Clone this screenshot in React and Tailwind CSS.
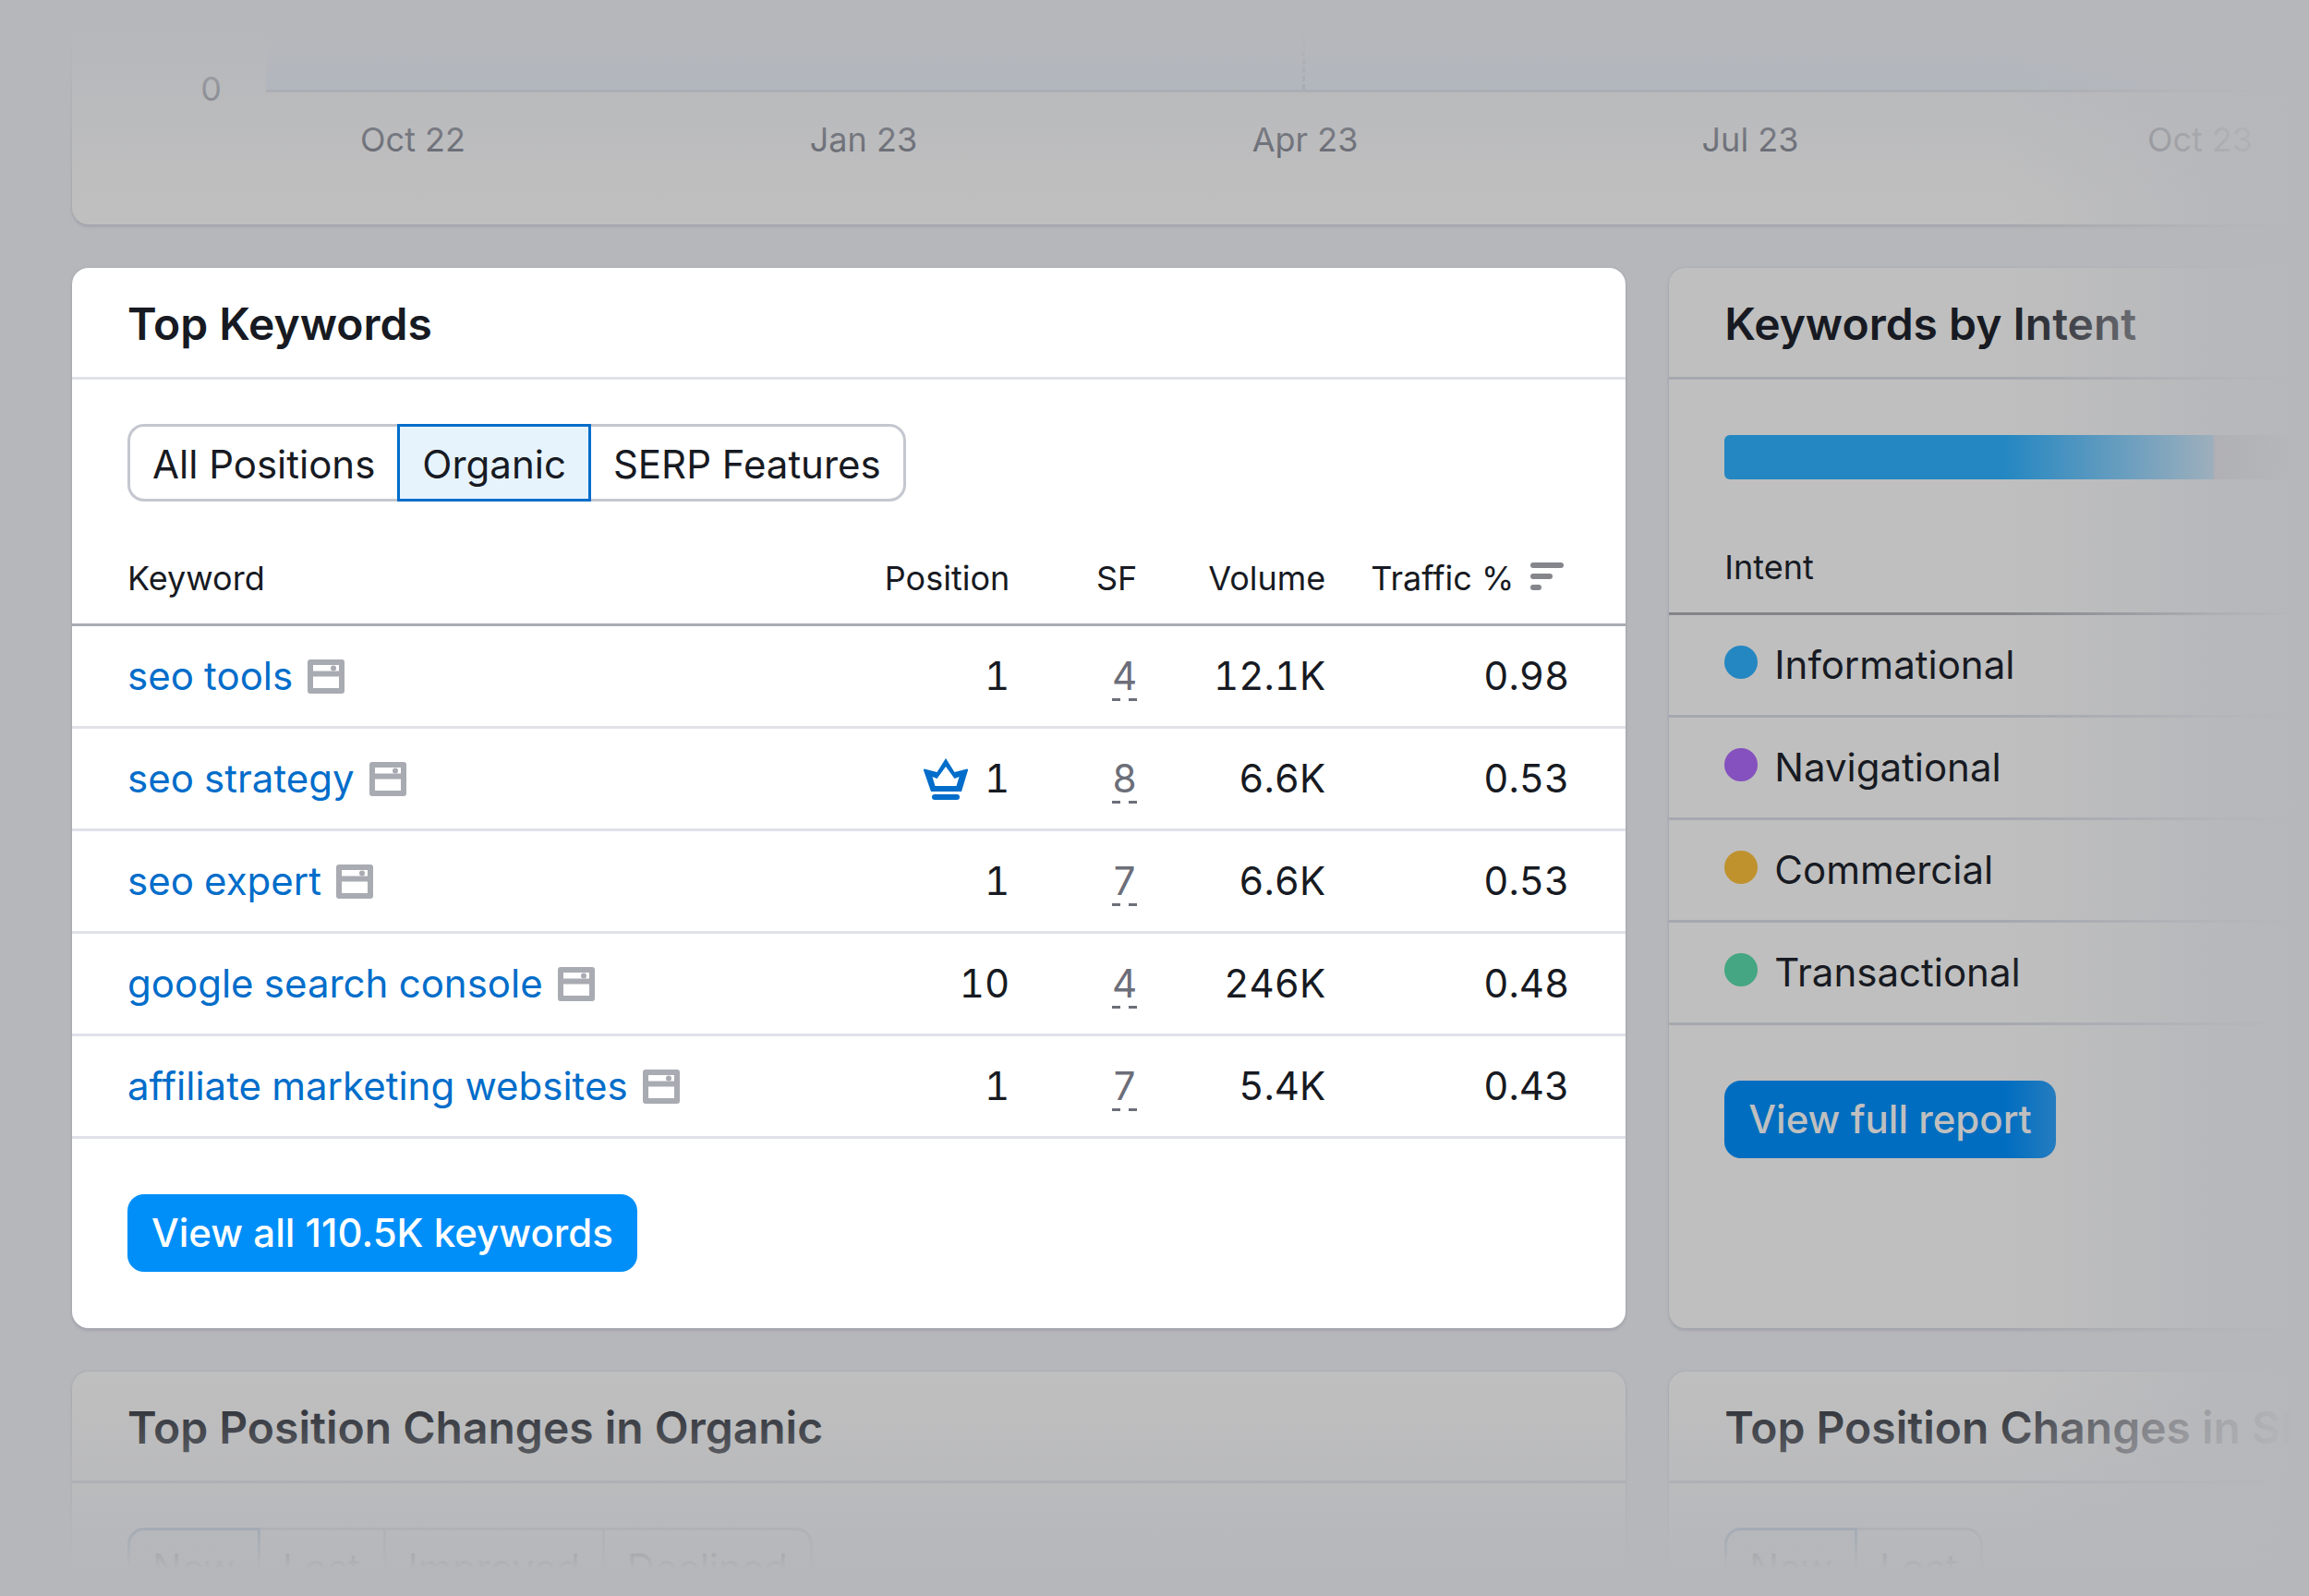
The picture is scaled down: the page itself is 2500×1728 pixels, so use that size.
const rows = [
  { keyword: 'seo tools', position: '1', sf: '4', volume: '12.1K', traffic: '0.98' },
  { keyword: 'seo strategy', position: '1', crown: true, sf: '8', volume: '6.6K', traffic: '0.53' },
  { keyword: 'seo expert', position: '1', sf: '7', volume: '6.6K', traffic: '0.53' },
  { keyword: 'google search console', position: '10', sf: '4', volume: '246K', traffic: '0.48' },
  { keyword: 'affiliate marketing websites', position: '1', sf: '7', volume: '5.4K', traffic: '0.43' },
];

const intents = [
  { name: 'Informational', dot: 'bg-[#2487c2]' },
  { name: 'Navigational', dot: 'bg-[#8451be]' },
  { name: 'Commercial', dot: 'bg-[#bf922e]' },
  { name: 'Transactional', dot: 'bg-[#44a682]' },
];

const months = ['Oct 22', 'Jan 23', 'Apr 23', 'Jul 23', 'Oct 23'];

const dimCard = 'bg-[#bfbfbf] shadow-[0_0_3px_#a0a3ab,0_3px_3px_#a4a7ad]';

function SerpIcon() {
  return (
    <svg className="mt-0.5 h-[37px] w-10 shrink-0" viewBox="0 0 40 37" fill="none" aria-hidden="true">
      <rect x="3" y="3" width="34" height="31" stroke="#a9abb2" strokeWidth="6" strokeLinejoin="round" />
      <path d="M3 15.5h34" stroke="#a9abb2" strokeWidth="6" />
      <circle cx="28" cy="9.5" r="3" fill="#a9abb2" />
    </svg>
  );
}

function CrownIcon() {
  return (
    <svg className="mt-0.5 h-[45px] w-12 shrink-0" viewBox="0 0 48 45" fill="#006dca" aria-hidden="true">
      <path
        fillRule="evenodd"
        d="M24 0 L33.5 15 L47 11.5 Q48.3 11.5 48 13 L41 36 H8 L0 13 Q-.3 11.5 1 11.5 L14.5 15 Z M24 9 L14.5 22 L9.5 20 L12.5 30 H35.5 L38.5 20 L33.5 22 Z"
      />
      <rect x="9" y="39" width="30" height="6" rx="3" />
    </svg>
  );
}

function SortIcon() {
  return (
    <svg className="mb-1 h-[30px] w-9 shrink-0" viewBox="0 0 36 30" fill="#85868c" aria-hidden="true">
      <rect width="36" height="6" rx="3" />
      <rect y="12" width="24" height="6" rx="3" />
      <rect y="24" width="12" height="6" rx="3" />
    </svg>
  );
}

function CardTitle({ children, className }) {
  return (
    <h2 className={'flex h-[121px] items-center overflow-hidden border-b-3 pt-1 pl-[60px] text-5xl leading-[60px] font-[630] whitespace-nowrap ' + className}>
      {children}
    </h2>
  );
}

function DimTabs({ items, label }) {
  return (
    <div role="group" aria-label={label} className="mx-[60px] mt-12 flex h-21">
      {items.map((item, i) => (
        <button
          key={item}
          type="button"
          aria-pressed={i === 0}
          className={
            i === 0
              ? 'rounded-l-[18px] border-3 border-[#5f7d98] bg-[#b2b8bd] px-6 pt-1'
              : 'border-y-3 border-r-3 border-[#9a9da8] px-6 pt-1 last:rounded-r-[18px]'
          }
        >
          {item}
        </button>
      ))}
    </div>
  );
}

export default function App() {
  return (
    <div className="relative h-screen overflow-hidden bg-[#b6b7bb] font-[Inter,sans-serif] text-[42px] leading-[60px] text-[#171a22] [font-optical-sizing:none]">
      <main className="grid grid-cols-[minmax(0,17fr)_minmax(0,7fr)] gap-x-[47px] gap-y-[47px] pl-[78px]">
        <section aria-label="Traffic trend" className={'col-span-2 h-[243px] rounded-bl-[18px] ' + dimCard}>
          <div className="flex h-[100px]">
            <span className="w-[210px] pt-[66px] pr-[48px] text-right text-4xl leading-[60px] text-[#4c4f5a]">0</span>
            <div className="flex-1 border-b-3 border-[#9a9da8] bg-[#a9b7c3]">
              <div className="ml-[1122px] h-full w-0 border-l-3 border-dashed border-[#8f939e]" />
            </div>
          </div>
          <div className="grid grid-cols-[484px_492px_464px_500px_474px] pl-[127px] pt-[21px] text-4xl leading-[60px] text-[#4c4f5a]">
            {months.map((m) => (
              <span key={m} className="text-center">{m}</span>
            ))}
          </div>
        </section>

        <section className="flex h-[1148px] flex-col rounded-[18px] bg-white shadow-[0_0_3px_#a0a3ab,0_3px_3px_#a4a7ad]">
          <CardTitle className="border-[#e0e1e9]">Top Keywords</CardTitle>
          <div role="group" aria-label="Positions" className="mx-[60px] mt-12 flex h-21">
            <button type="button" className="rounded-l-[18px] border-y-3 border-l-3 border-[#c4c7cf] px-6 pt-1">All Positions</button>
            <button type="button" aria-pressed="true" className="border-3 border-[#006dca] bg-[#e6f3fd] px-6 pt-1">Organic</button>
            <button type="button" className="rounded-r-[18px] border-y-3 border-r-3 border-[#c4c7cf] px-6 pt-1">SERP Features</button>
          </div>
          <table className="mt-[33px] w-full table-fixed border-collapse">
            <thead>
              <tr className="h-[100px] border-b-3 border-[#a9abb6] text-4xl">
                <th className="pt-0.5 pl-[60px] text-left font-normal">Keyword</th>
                <th className="w-[182px] pt-0.5 text-right font-normal">Position</th>
                <th className="w-[138px] pt-0.5 text-right font-normal">SF</th>
                <th className="w-[204px] pt-0.5 text-right font-normal">Volume</th>
                <th className="w-[325px] pt-0.5 pr-[61px] font-normal">
                  <button type="button" className="ml-auto flex items-center gap-[18px] pr-1.5">
                    Traffic %<SortIcon />
                  </button>
                </th>
              </tr>
            </thead>
            <tbody className="tabular-nums">
              {rows.map((r) => (
                <tr key={r.keyword} className="h-[111px] border-b-3 border-[#e0e1e9]">
                  <td className="pl-[60px]">
                    <div className="flex items-center gap-4">
                      <a href="#" className="whitespace-nowrap text-[#006dca]">{r.keyword}</a>
                      <SerpIcon />
                    </div>
                  </td>
                  <td>
                    <div className="flex items-center justify-end gap-[18px]">
                      {r.crown && <CrownIcon />}
                      {r.position}
                    </div>
                  </td>
                  <td className="text-right">
                    <a href="#" className="inline-block bg-[repeating-linear-gradient(90deg,#6c6e79_0_9px,transparent_9px_18px)] bg-[length:100%_3px] bg-bottom bg-no-repeat leading-[54px] text-[#6c6e79]">{r.sf}</a>
                  </td>
                  <td className="text-right">{r.volume}</td>
                  <td className="pr-[61px] text-right">{r.traffic}</td>
                </tr>
              ))}
            </tbody>
          </table>
          <button type="button" className="mt-[60px] ml-[60px] h-21 self-start rounded-[18px] bg-[#008ff8] px-[26px] font-medium text-white">
            View all 110.5K keywords
          </button>
        </section>

        <section className={'flex h-[1148px] flex-col rounded-l-[18px] ' + dimCard}>
          <CardTitle className="border-[#a6a8b0]">Keywords by Intent</CardTitle>
          <div className="mt-[60px] ml-[60px] flex h-12">
            <div className="w-[530px] rounded-l-md bg-[#2487c2]" />
            <div className="flex-1 bg-[#8e8a96]" />
          </div>
          <table className="mt-[42px] w-full border-collapse">
            <thead>
              <tr className="h-[103px] border-b-3 border-[#838489] text-4xl">
                <th className="pt-1 pl-[60px] text-left font-normal">Intent</th>
              </tr>
            </thead>
            <tbody>
              {intents.map((it) => (
                <tr key={it.name} className="h-[111px] border-b-3 border-[#a6a8b0]">
                  <td className="pl-[60px]">
                    <div className="flex items-center gap-[18px]">
                      <span className={'mb-1.5 size-9 rounded-full ' + it.dot} />
                      {it.name}
                    </div>
                  </td>
                </tr>
              ))}
            </tbody>
          </table>
          <button type="button" className="mt-[60px] ml-[60px] h-21 self-start rounded-[18px] bg-[#006dc0] px-[26px] font-medium text-[#bfbfbf]">
            View full report
          </button>
        </section>

        <section className={'h-[400px] rounded-t-[18px] ' + dimCard}>
          <CardTitle className="border-[#a6a8b0]">Top Position Changes in Organic</CardTitle>
          <DimTabs label="Organic changes" items={['New', 'Lost', 'Improved', 'Declined']} />
        </section>
        <section className={'h-[400px] rounded-tl-[18px] ' + dimCard}>
          <CardTitle className="border-[#a6a8b0]">Top Position Changes in SERP Features</CardTitle>
          <DimTabs label="SERP feature changes" items={['New', 'Lost']} />
        </section>
      </main>

      <div className="pointer-events-none absolute inset-x-0 top-0 h-[220px] bg-linear-to-b from-[#b6b7bb] from-15% to-[#b6b7bb]/0" />
      <div className="pointer-events-none absolute inset-x-0 bottom-0 h-[240px] bg-linear-to-t from-[#b6b7bb] from-12% to-[#b6b7bb]/0" />
      <div className="pointer-events-none absolute inset-y-0 right-0 w-[330px] bg-linear-to-l from-[#b6b7bb] from-5% via-[#b6b7bb]/85 via-30% to-[#b6b7bb]/0" />
    </div>
  );
}
